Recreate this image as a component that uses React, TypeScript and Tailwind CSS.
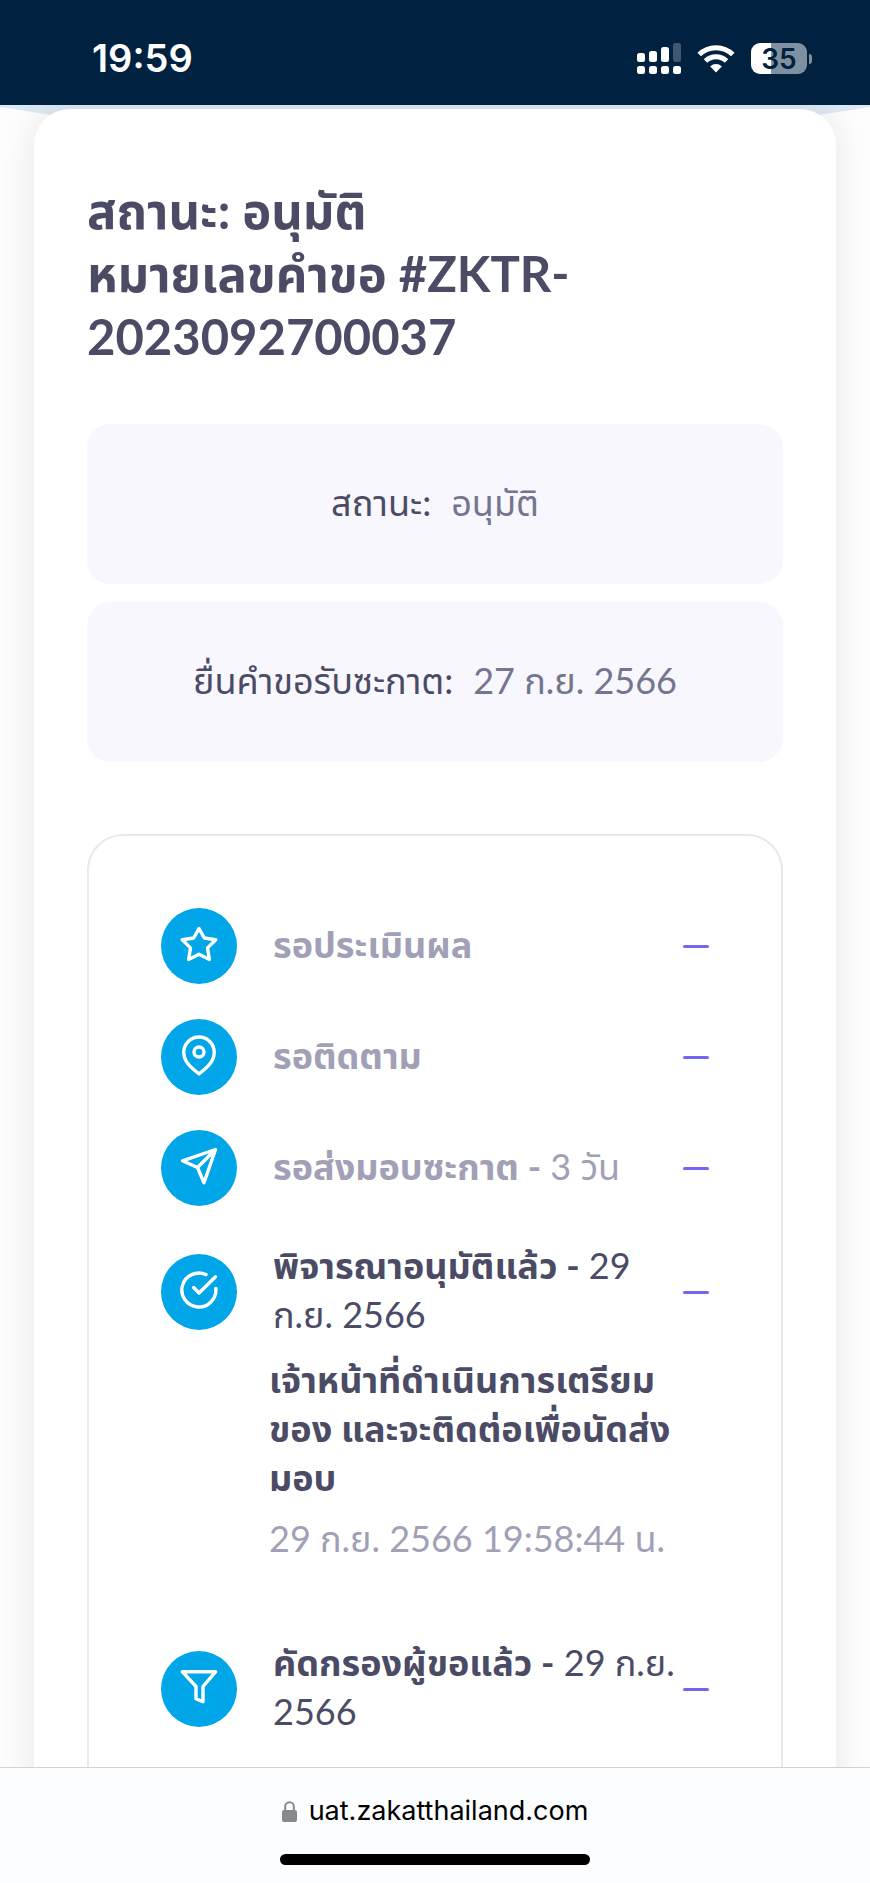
import type { ReactNode } from "react";

const stroke = {
  fill: "none",
  stroke: "#fff",
  strokeWidth: 3.4,
  strokeLinecap: "round" as const,
  strokeLinejoin: "round" as const,
};

const icons = {
  star: (
    <path d="M38 20.5l5.3 9.5 11.5 1.8-8.3 8.1 1.9 11.6L38 46.3l-10.4 5.2 1.9-11.6-8.3-8.1L32.7 30z" />
  ),
  pin: (
    <>
      <path d="M53.2 33.2c0 8.600-5.600 14.600-15.200 21.600-9.600-7-15.200-13-15.200-21.600a15.200 15.200 0 0 1 30.400 0z" />
      <circle cx="38" cy="33" r="5" />
    </>
  ),
  send: <path d="M54.5 19.5L21.5 30.8 36.5 37.5 43 52.8zM36.5 37.5l18-18" />,
  check: (
    <>
      <path d="M45 20.6A17 17 0 1 0 54.8 34.5" />
      <path d="M32.7 33.5L38 39l16.500-16.300" />
    </>
  ),
  filter: <path d="M21.3 20.7h33.4L42 35.5v15.2l-7-3V35.5z" />,
};

type StepProps = {
  icon: keyof typeof icons;
  title: string;
  date?: ReactNode;
  done?: boolean;
  children?: ReactNode;
};

function Step({ icon, title, date, done, children }: StepProps) {
  return (
    <li>
      <div className="flex items-center">
        <span className="flex h-19 w-19 shrink-0 rounded-full bg-[#00a6e8]">
          <svg viewBox="0 0 76 76" className="h-full w-full" {...stroke}>
            {icons[icon]}
          </svg>
        </span>
        <h2
          className={`ml-9 flex-1 whitespace-nowrap pb-1 text-4xl/[49px] font-bold ${
            done ? "text-[#4b4b66]" : "text-[#a1a0b6]"
          }`}
        >
          {title}
          {date && <span className="font-normal"> {date}</span>}
        </h2>
        <button type="button" aria-label={title} className="flex h-12 w-[26px] shrink-0 items-center">
          <span className="h-[3px] w-full rounded-full bg-[#7367f0]" />
        </button>
      </div>
      {children}
    </li>
  );
}

function InfoCard({ label, value }: { label: string; value: string }) {
  return (
    <div className="flex h-40 items-center justify-center gap-5 rounded-3xl bg-[#f8f7fd] pb-1 text-4xl font-normal">
      <dt className="text-[#4b4b66]">{label}</dt>
      <dd className="text-[#75758f]">{value}</dd>
    </div>
  );
}

function StatusBar() {
  return (
    <header className="flex h-[105px] shrink-0 items-center justify-between bg-[#00213f] pt-3 pr-[58px] pl-[92px]">
      <time className="font-['Inter'] text-[38px] font-semibold text-white">19:59</time>
      <div className="flex items-center gap-4">
        <svg width="44" height="31" viewBox="0 0 44 31" fill="#fff">
          <rect x="0" y="10" width="8" height="9" rx="2.5" />
          <rect x="12" y="8" width="8" height="11" rx="2.5" />
          <rect x="24" y="4" width="8" height="15" rx="2.5" />
          <rect x="36" y="0" width="8" height="19" rx="2.5" opacity=".25" />
          <rect x="0" y="23" width="8" height="8" rx="2.5" />
          <rect x="12" y="23" width="8" height="8" rx="2.5" />
          <rect x="24" y="23" width="8" height="8" rx="2.5" />
          <rect x="36" y="23" width="8" height="8" rx="2.5" />
        </svg>
        <svg width="38" height="29" viewBox="0 0 38 29" fill="none" stroke="#fff" strokeWidth="5">
          <path d="M2.2 10.500a24 24 0 0 1 33.600 0" />
          <path d="M8.5 17a15 15 0 0 1 21 0" />
          <path d="M19 28.500l-5.800-6a8.200 8.200 0 0 1 11.600 0z" fill="#fff" stroke="none" />
        </svg>
        <div className="flex items-center gap-[2px]">
          <div className="flex h-[31px] w-14 items-center justify-center rounded-[9px] bg-linear-to-r from-white from-35% to-[#8090a0] to-35% font-['Inter'] text-[28px] font-semibold text-[#00213f]">
            35
          </div>
          <span className="h-[10px] w-[3px] rounded-r-full bg-[#8090a0]" />
        </div>
      </div>
    </header>
  );
}

export default function App() {
  return (
    <div className="flex h-screen flex-col overflow-hidden bg-white font-['Lato','Noto_Sans_Thai',sans-serif]">
      <StatusBar />
      <main className="relative min-h-0 flex-1 overflow-hidden bg-[#fdfdfd] px-[34px] pt-1">
        <svg
          className="absolute inset-x-0 top-0 h-4 w-full"
          viewBox="0 0 870 16"
          preserveAspectRatio="none"
        >
          <path d="M0 0h870v2L780 16H90L0 2z" fill="#dde9f4" />
        </svg>
        <article className="relative rounded-[36px] bg-white px-[53px] pt-[70px] pb-14 shadow-[0_0_36px_rgba(0,0,0,0.09)]">
          <h1 className="text-[49px]/[63px] font-bold text-[#4b4b66]">
            สถานะ: อนุมัติ
            <br />
            หมายเลขคำขอ #ZKTR-
            <br />
            2023092700037
          </h1>
          <dl className="mt-14 flex flex-col gap-[18px]">
            <InfoCard label="สถานะ:" value="อนุมัติ" />
            <InfoCard label="ยื่นคำขอรับซะกาต:" value="27 ก.ย. 2566" />
          </dl>
          <ol className="mt-[72px] flex flex-col gap-[35px] rounded-[36px] border-2 border-[#e9e9eb] p-[72px]">
            <Step icon="star" title="รอประเมินผล" />
            <Step icon="pin" title="รอติดตาม" />
            <Step icon="send" title="รอส่งมอบซะกาต -" date="3 วัน" />
            <Step
              icon="check"
              title="พิจารณาอนุมัติแล้ว -"
              date={
                <>
                  29
                  <br />
                  ก.ย. 2566
                </>
              }
              done
            >
              <div className="ml-27 pt-3 pb-10 text-4xl/[49px] whitespace-nowrap">
                <p className="font-bold text-[#4b4b66]">
                  เจ้าหน้าที่ดำเนินการเตรียม
                  <br />
                  ของ และจะติดต่อเพื่อนัดส่ง
                  <br />
                  มอบ
                </p>
                <p className="mt-3 font-normal text-[#a1a0b6]">29 ก.ย. 2566 19:58:44 น.</p>
              </div>
            </Step>
            <Step
              icon="filter"
              title="คัดกรองผู้ขอแล้ว -"
              date={
                <>
                  29 ก.ย.
                  <br />
                  2566
                </>
              }
              done
            />
          </ol>
        </article>
      </main>
      <footer className="flex h-29 shrink-0 flex-col items-center border-t border-[#d2d3d6] bg-[#fcfdff] pt-6">
        <div className="flex items-center gap-3 font-['Inter'] text-[27px]/[38px] text-black">
          <svg width="15" height="21" viewBox="0 0 15 21">
            <rect x="0" y="9" width="15" height="12" rx="2" fill="#88898d" />
            <path d="M3.2 9.500V5.600a4.300 4.300 0 0 1 8.600 0v3.900" fill="none" stroke="#88898d" strokeWidth="2" />
          </svg>
          uat.zakatthailand.com
        </div>
        <div className="mt-6 h-[11px] w-[310px] rounded-full bg-black" />
      </footer>
    </div>
  );
}
